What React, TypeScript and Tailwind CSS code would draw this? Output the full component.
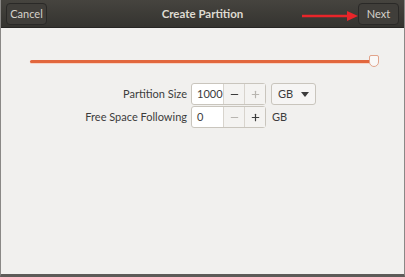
import { Minus, Plus } from 'lucide-react';

function Stepper({ value, minusOff, plusOff }: { value: string; minusOff?: boolean; plusOff?: boolean }) {
  return (
    <div className="flex h-[22px] rounded-[3px] border border-[#c9c5bd] bg-white">
      <div className="flex w-[31px] items-center pl-[5px] text-[11px] text-[#3c3c3c]">{value}</div>
      <div className="flex w-[21px] items-center justify-center border-l border-[#d8d4cd] bg-[#f4f3f1]">
        <Minus size={11} strokeWidth={2.6} className={minusOff ? 'text-[#b8b5b0]' : 'text-[#3c3c3c]'} />
      </div>
      <div className="flex w-[21px] items-center justify-center border-l border-[#d8d4cd] bg-[#f4f3f1]">
        <Plus size={11} strokeWidth={2.6} className={plusOff ? 'text-[#b8b5b0]' : 'text-[#3c3c3c]'} />
      </div>
    </div>
  );
}

export default function App() {
  return (
    <div
      className="flex h-[277px] w-[405px] flex-col overflow-hidden border-x border-b-[3px] border-x-[#8a8886] border-b-[#5d5b58] bg-[#f1f0ee]"
      style={{ fontFamily: 'Lato, "Noto Sans", sans-serif' }}
    >
      <div className="relative flex h-[28px] items-center justify-between bg-gradient-to-b from-[#46443f] to-[#34332f] px-[5px] shadow-[inset_0_-1px_0_#272624]">
        <div className="flex h-[22px] w-[41px] items-center justify-center rounded-[4px] border border-[#2a2927] bg-[#403e3a] text-[11px] text-[#d6d2ca]">
          Cancel
        </div>
        <div className="absolute left-1/2 -translate-x-1/2 text-[11.5px] font-bold text-[#dfdbd2]">Create Partition</div>
        <div className="flex h-[22px] w-[41px] items-center justify-center rounded-[4px] border border-[#2a2927] bg-[#403e3a] text-[11px] text-[#d6d2ca]">
          Next
        </div>
        <svg className="absolute left-[300px] top-[10px]" width="58" height="12" viewBox="0 0 58 12">
          <line x1="1" y1="6" x2="48" y2="6" stroke="#e8252a" strokeWidth="2.5" />
          <polygon points="46,1 57,6 46,11" fill="#e8252a" />
        </svg>
      </div>
      <div className="flex flex-col pt-[27px]">
        <div className="relative mx-[29px] flex h-[12px] items-center">
          <div className="h-[3px] w-[342px] rounded bg-[#e2673d] shadow-[0_1px_0_#f7d3c4]" />
          <div className="absolute left-[339px] top-0 h-[12px] w-[10px] rounded-b-[5px] rounded-t-[2px] border border-[#e2a48b] bg-[#f9f8f7]" />
        </div>
        <div className="mt-[16px] grid grid-cols-[190px_auto] items-center gap-y-[1px] text-[11px] text-[#3c3c3c]">
          <div className="pr-[4px] text-right">Partition Size</div>
          <div className="flex items-center gap-[5px]">
            <Stepper value="1000" plusOff />
            <div className="flex h-[22px] w-[45px] items-center justify-between rounded-[3px] border border-[#c9c5bd] bg-[#f6f5f4] px-[6px]">
              <span>GB</span>
              <svg width="8" height="5" viewBox="0 0 8 5">
                <polygon points="0,0 8,0 4,5" fill="#3c3c3c" />
              </svg>
            </div>
          </div>
          <div className="pr-[4px] text-right">Free Space Following</div>
          <div className="flex items-center gap-[6px]">
            <Stepper value="0" minusOff />
            <span>GB</span>
          </div>
        </div>
      </div>
    </div>
  );
}
